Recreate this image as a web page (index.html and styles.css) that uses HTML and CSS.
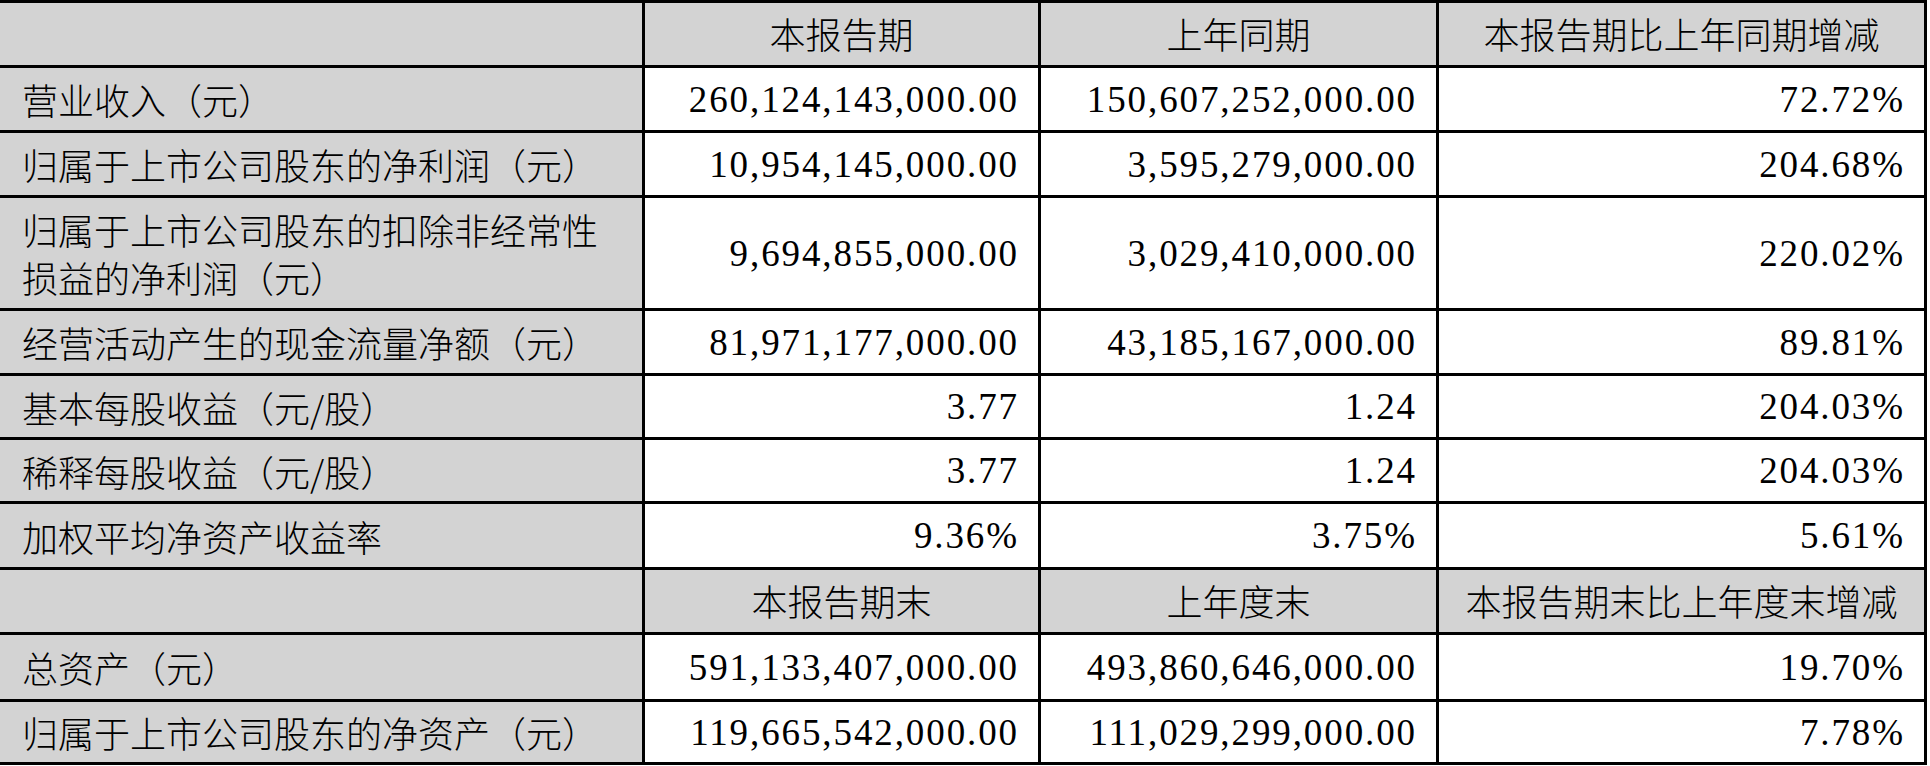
FILE: index.html
```html
<!DOCTYPE html>
<html lang="zh-CN">
<head>
<meta charset="utf-8">
<title>主要会计数据</title>
<link rel="stylesheet" href="styles.css">
</head>
<body>
<div class="sheet">
  <div class="c lab"></div>
  <div class="c hd">本报告期</div>
  <div class="c hd">上年同期</div>
  <div class="c hd">本报告期比上年同期增减</div>

  <div class="c lab">营业收入（元）</div>
  <div class="c num">260,124,143,000.00</div>
  <div class="c num">150,607,252,000.00</div>
  <div class="c num">72.72%</div>

  <div class="c lab">归属于上市公司股东的净利润（元）</div>
  <div class="c num">10,954,145,000.00</div>
  <div class="c num">3,595,279,000.00</div>
  <div class="c num">204.68%</div>

  <div class="c lab">归属于上市公司股东的扣除非经常性损益的净利润（元）</div>
  <div class="c num">9,694,855,000.00</div>
  <div class="c num">3,029,410,000.00</div>
  <div class="c num">220.02%</div>

  <div class="c lab">经营活动产生的现金流量净额（元）</div>
  <div class="c num">81,971,177,000.00</div>
  <div class="c num">43,185,167,000.00</div>
  <div class="c num">89.81%</div>

  <div class="c lab">基本每股收益（元/股）</div>
  <div class="c num">3.77</div>
  <div class="c num">1.24</div>
  <div class="c num">204.03%</div>

  <div class="c lab">稀释每股收益（元/股）</div>
  <div class="c num">3.77</div>
  <div class="c num">1.24</div>
  <div class="c num">204.03%</div>

  <div class="c lab">加权平均净资产收益率</div>
  <div class="c num">9.36%</div>
  <div class="c num">3.75%</div>
  <div class="c num">5.61%</div>

  <div class="c lab"></div>
  <div class="c hd">本报告期末</div>
  <div class="c hd">上年度末</div>
  <div class="c hd">本报告期末比上年度末增减</div>

  <div class="c lab">总资产（元）</div>
  <div class="c num">591,133,407,000.00</div>
  <div class="c num">493,860,646,000.00</div>
  <div class="c num">19.70%</div>

  <div class="c lab">归属于上市公司股东的净资产（元）</div>
  <div class="c num">119,665,542,000.00</div>
  <div class="c num">111,029,299,000.00</div>
  <div class="c num">7.78%</div>
</div>
</body>
</html>
```

FILE: styles.css
```css
html, body {
  margin: 0;
  padding: 0;
  background: #ffffff;
}

.sheet {
  display: grid;
  width: 1927px;
  grid-template-columns: 642px 393px 395px 485px;
  grid-template-rows: 62px 62px 62px 110px 62px 61px 61px 63px 62px 64px 60px;
  gap: 3px;
  padding: 3px 3px 3px 0;
  box-sizing: border-box;
  background: #000000;
  font-family: "Noto Sans CJK SC", "Noto Sans", sans-serif;
  font-size: 36px;
  font-weight: 300;
  color: #000000;
}

.c {
  display: flex;
  align-items: center;
  background: #ffffff;
  box-sizing: border-box;
  overflow: hidden;
}

.lab {
  background: #d3d3d3;
  padding: 0 40px 0 22px;
  line-height: 48px;
}

.hd {
  background: #d3d3d3;
  justify-content: center;
  padding-bottom: 2px;
}

.num {
  justify-content: flex-end;
  padding-right: 19px;
  font-family: "Liberation Serif", "Noto Sans CJK SC", serif;
  font-size: 37px;
  font-weight: 400;
  letter-spacing: 1.9px;
}
```
